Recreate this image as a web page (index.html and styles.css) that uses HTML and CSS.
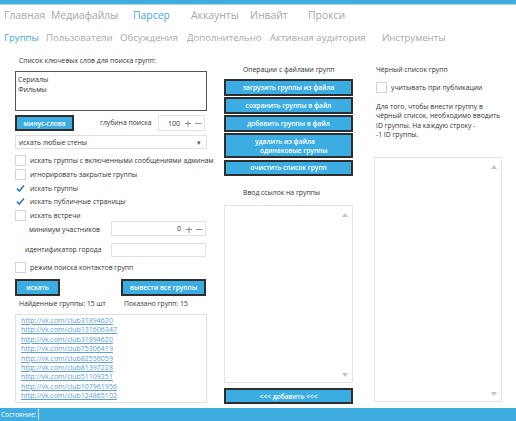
FILE: index.html
```html
<!DOCTYPE html>
<html lang="ru">
<head>
<meta charset="utf-8">
<title>Парсер — Группы</title>
<link rel="stylesheet" href="styles.css">
</head>
<body>
<div class="app">
  <div class="topbar"></div>
  <nav class="tabs">
    <span class="tab">Главная</span>
    <span class="tab">Медиафайлы</span>
    <span class="tab active">Парсер</span>
    <span class="tab">Аккаунты</span>
    <span class="tab">Инвайт</span>
    <span class="tab">Прокси</span>
  </nav>
  <nav class="subtabs">
    <span class="sub active">Группы</span>
    <span class="sub">Пользователи</span>
    <span class="sub">Обсуждения</span>
    <span class="sub">Дополнительно</span>
    <span class="sub">Активная аудитория</span>
    <span class="sub">Инструменты</span>
  </nav>

  <main class="content">
    <section class="col-left">
      <div class="lbl">Список ключевых слов для поиска групп:</div>
      <div class="keywords"><div>Сериалы</div><div>Фильмы</div></div>
      <div class="row-depth">
        <button class="btn btn-minus">минус-слова</button>
        <span class="lbl depth-lbl">глубина поиска</span>
        <div class="num num-depth"><span class="num-val">100</span><span class="pm">+</span><span class="pm">−</span></div>
      </div>
      <div class="select"><span>искать любые стены</span><span class="caret">▾</span></div>
      <div class="checks">
        <label class="chk"><span class="box"></span><span>искать группы с включенными сообщениями админам</span></label>
        <label class="chk"><span class="box"></span><span>игнорировать закрытые группы</span></label>
        <label class="chk"><span class="box checked"><svg viewBox="0 0 11 11" width="11" height="11"><path d="M2 5.6 L4.4 8 L9 2.6" fill="none" stroke="#2f7fc9" stroke-width="1.6"/></svg></span><span>искать группы</span></label>
        <label class="chk"><span class="box checked"><svg viewBox="0 0 11 11" width="11" height="11"><path d="M2 5.6 L4.4 8 L9 2.6" fill="none" stroke="#2f7fc9" stroke-width="1.6"/></svg></span><span>искать публичные страницы</span></label>
        <label class="chk"><span class="box"></span><span>искать встречи</span></label>
      </div>
      <div class="field field-min">
        <span class="lbl">минимум участников</span>
        <div class="num num-min"><span class="num-val">0</span><span class="pm">+</span><span class="pm">−</span></div>
      </div>
      <div class="field field-city">
        <span class="lbl">идентификатор города</span>
        <div class="num num-city"></div>
      </div>
      <label class="chk chk-contacts"><span class="box"></span><span>режим поиска контактов групп</span></label>
      <div class="row-search">
        <button class="btn btn-search">искать</button>
        <button class="btn btn-all">вывести все группы</button>
      </div>
      <div class="row-found">
        <span class="lbl found">Найденные группы: 15 шт</span>
        <span class="lbl shown">Показано групп: 15</span>
      </div>
      <div class="links">
        <a href="#">http://vk.com/club31894620</a>
        <a href="#">http://vk.com/club131606347</a>
        <a href="#">http://vk.com/club31894620</a>
        <a href="#">http://vk.com/club75306419</a>
        <a href="#">http://vk.com/club82556059</a>
        <a href="#">http://vk.com/club81397228</a>
        <a href="#">http://vk.com/club51109251</a>
        <a href="#">http://vk.com/club107961956</a>
        <a href="#">http://vk.com/club124865102</a>
      </div>
    </section>

    <section class="col-mid">
      <div class="lbl head">Операции с файлами групп</div>
      <div class="fbtns">
        <button class="btn fbtn">загрузить группы из файла</button>
        <button class="btn fbtn">сохранить группы в файл</button>
        <button class="btn fbtn">добавить группы в файл</button>
        <button class="btn fbtn tall"><span class="l1">удалить из файла</span><span class="l2">одинаковые группы</span></button>
        <button class="btn fbtn">очистить список групп</button>
      </div>
      <div class="lbl head head2">Ввод ссылок на группы</div>
      <div class="area area-mid"><span class="up"></span><span class="down"></span></div>
      <button class="btn btn-add">&lt;&lt;&lt; добавить &lt;&lt;&lt;</button>
    </section>

    <section class="col-right">
      <div class="lbl head">Чёрный список групп</div>
      <label class="chk chk-pub"><span class="box"></span><span>учитывать при публикации</span></label>
      <p class="note">Для того, чтобы внести группу в<br>чёрный список, необходимо вводить<br>ID группы. На каждую строку -<br>-1 ID группы.</p>
      <div class="area area-right"><span class="up"></span><span class="down"></span></div>
    </section>
  </main>

  <footer class="status">
    <span class="status-text">Состояние:</span>
    <span class="status-sep"></span>
  </footer>
</div>
</body>
</html>
```

FILE: styles.css
```css
* { box-sizing: border-box; }
html, body { margin: 0; padding: 0; background: #fff; }
body {
  font-family: "Open Sans", "Noto Sans", "Liberation Sans", sans-serif;
  color: #222;
  width: 516px;
  height: 421px;
  overflow: hidden;
}
.app { width: 516px; height: 421px; display: flex; flex-direction: column; }

.topbar { height: 5px; background: #3fade0; border-bottom: 1px solid #a8d7ee; }

.tabs {
  height: 20px;
  display: grid;
  grid-template-columns: 47px 82px 58px 59px 58px auto;
  padding-left: 4px;
  font-size: 10.4px;
  line-height: 20px;
  color: #a6a6a6;
}
.tab.active { color: #3ea7dc; }

.subtabs {
  margin-top: 3px;
  height: 20px;
  display: grid;
  grid-template-columns: 42px 74px 67px 83px 112px auto;
  padding-left: 4px;
  font-size: 9.6px;
  line-height: 20px;
  color: #a8a8a8;
}
.sub.active { color: #3ea7dc; }

.content {
  margin-top: 7px;
  height: 353px;
  display: flex;
  padding-left: 15px;
}

.lbl { font-size: 6.8px; line-height: 10px; color: #333; white-space: nowrap; }

.btn {
  font-family: inherit;
  background: #3cade2;
  border: 2px solid #2e2e2e;
  color: #fff;
  font-size: 6.6px;
  font-weight: 600;
  padding: 0;
  margin: 0;
  cursor: pointer;
}

/* left column */
.col-left { width: 192px; display: flex; flex-direction: column; padding-top: 1px; }
.col-left > .lbl { padding-left: 4px; }
.keywords {
  margin-top: 5px;
  height: 40px;
  border: 1px solid #555;
  padding: 3px 2px;
  font-size: 7px;
  line-height: 10px;
  color: #333;
}
.row-depth { margin-top: 4px; height: 16px; display: flex; align-items: center; }
.btn-minus { width: 59px; height: 16px; }
.depth-lbl { margin-left: 26px; }
.num {
  height: 16px;
  border: 1px solid #e2e2e2;
  display: flex;
  align-items: center;
  justify-content: flex-end;
  padding-right: 1px;
  font-size: 7px;
  color: #333;
}
.num-depth { width: 47px; margin-left: auto; margin-right: 2px; }
.num-val { margin-right: 3px; }
.pm { font-size: 13px; line-height: 10px; color: #8a8a8a; width: 10px; text-align: center; }

.select {
  margin-top: 4px;
  height: 14px;
  border: 1px solid #e0e0e0;
  display: flex;
  align-items: center;
  justify-content: space-between;
  padding: 0 5px 0 3px;
  font-size: 6.8px;
  color: #333;
}
.caret { font-size: 7px; color: #555; }

.checks { margin-top: 6px; display: flex; flex-direction: column; gap: 2.75px; }
.chk { display: flex; align-items: center; height: 11px; font-size: 6.8px; color: #333; white-space: nowrap; }
.box {
  width: 11px; height: 11px;
  border: 1px solid #d4d4d4;
  background: #fff;
  margin-right: 4px;
  flex: none;
  position: relative;
}
.box.checked { border-color: #fff; }
.box svg { position: absolute; left: -1px; top: -1px; }

.field { display: flex; align-items: center; }
.field-min { height: 15px; padding-left: 14px; }
.field-min .lbl { position: relative; top: 1.5px; }
.field-city { margin-top: 7px; height: 14px; padding-left: 10px; }
.field .num { width: 95px; margin-left: auto; margin-right: 1px; height: 15px; }
.field-city .num { height: 14px; }
.chk-contacts { margin-top: 5px; }

.row-search { margin-top: 6px; height: 17px; display: flex; }
.btn-search { width: 45px; height: 17px; }
.btn-all { width: 85px; height: 17px; margin-left: 61px; }

.row-found { margin-top: 3px; height: 10px; display: flex; }
.row-found .found { padding-left: 4px; width: 109px; }

.links {
  margin-top: 5px;
  height: 89px;
  border: 1px solid #e0e0e0;
  padding: 1px 0 0 5px;
  display: flex;
  flex-direction: column;
}
.links a {
  font-size: 7px;
  line-height: 9.4px;
  color: #5b9ed6;
  text-decoration: underline;
}

/* middle column */
.col-mid { width: 129px; margin-left: 17px; display: flex; flex-direction: column; padding-top: 10px; }
.head { padding-left: 19px; }
.fbtns { margin-top: 4px; display: flex; flex-direction: column; gap: 1.5px; }
.fbtn { height: 16.5px; width: 129px; }
.fbtn.tall { height: 25px; display: flex; flex-direction: column; align-items: flex-start; justify-content: center; padding-left: 29px; line-height: 9px; }
.fbtn.tall .l2 { margin-left: 5px; }
.head2 { margin-top: 12px; }
.area { border: 1px solid #e4e4e4; position: relative; }
.area-mid { margin-top: 7px; height: 178px; }
.up, .down { position: absolute; right: 4px; width: 0; height: 0; border-left: 3px solid transparent; border-right: 3px solid transparent; }
.up { top: 7px; border-bottom: 4px solid #c4c4c4; }
.down { bottom: 5px; border-top: 4px solid #c4c4c4; }
.btn-add { margin-top: 5px; height: 16px; width: 129px; }

/* right column */
.col-right { width: 128px; margin-left: 21px; display: flex; flex-direction: column; padding-top: 10px; }
.col-right .head { padding-left: 2px; }
.chk-pub { margin-top: 7px; padding-left: 2px; }
.note { margin: 9px 0 0; padding-left: 2px; font-size: 6.8px; line-height: 9.4px; color: #333; }
.area-right { margin-top: 17px; height: 245px; }

.status {
  margin-top: auto;
  height: 13px;
  background: #3fade0;
  display: flex;
  align-items: center;
}
.status-text { font-size: 6.5px; color: #fff; padding-left: 1px; width: 38px; white-space: nowrap; }
.status-sep { width: 1px; height: 11px; background: #cfeaf7; }
```
